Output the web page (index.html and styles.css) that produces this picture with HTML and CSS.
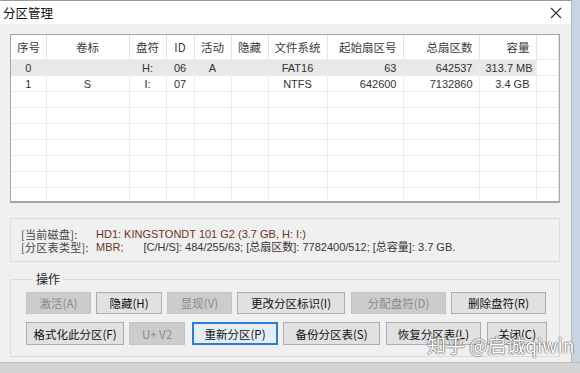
FILE: index.html
```html
<!DOCTYPE html>
<html lang="zh-CN">
<head>
    <meta charset="UTF-8">
    <title>分区管理</title>
    <link rel="stylesheet" href="styles.css">
</head>
<body>
    <div class="window">
        <div class="titlebar">
            <span class="title">分区管理</span>
            <svg class="close" width="12" height="12" viewBox="0 0 12 12">
                <path d="M1 1 L11 11 M11 1 L1 11" stroke="#333" stroke-width="1.1" fill="none"/>
            </svg>
        </div>

        <div class="content">
            <div class="list">
                <table>
                    <colgroup>
                        <col class="c-no"><col class="c-label"><col class="c-drive"><col class="c-id">
                        <col class="c-act"><col class="c-hide"><col class="c-fs"><col class="c-start">
                        <col class="c-total"><col class="c-size"><col>
                    </colgroup>
                    <thead>
                        <tr>
                            <th>序号</th><th>卷标</th><th>盘符</th><th>ID</th><th>活动</th><th>隐藏</th>
                            <th>文件系统</th><th class="r">起始扇区号</th><th class="r">总扇区数</th><th class="r">容量</th><th></th>
                        </tr>
                    </thead>
                    <tbody>
                        <tr class="sel">
                            <td>0</td><td></td><td>H:</td><td>06</td><td>A</td><td></td>
                            <td>FAT16</td><td class="r">63</td><td class="r">642537</td><td class="r">313.7 MB</td><td class="blank"></td>
                        </tr>
                        <tr>
                            <td>1</td><td>S</td><td>I:</td><td>07</td><td></td><td></td>
                            <td>NTFS</td><td class="r">642600</td><td class="r">7132860</td><td class="r">3.4 GB</td><td></td>
                        </tr>
                        <tr><td></td><td></td><td></td><td></td><td></td><td></td><td></td><td></td><td></td><td></td><td></td></tr>
                        <tr><td></td><td></td><td></td><td></td><td></td><td></td><td></td><td></td><td></td><td></td><td></td></tr>
                        <tr><td></td><td></td><td></td><td></td><td></td><td></td><td></td><td></td><td></td><td></td><td></td></tr>
                        <tr><td></td><td></td><td></td><td></td><td></td><td></td><td></td><td></td><td></td><td></td><td></td></tr>
                        <tr><td></td><td></td><td></td><td></td><td></td><td></td><td></td><td></td><td></td><td></td><td></td></tr>
                        <tr><td></td><td></td><td></td><td></td><td></td><td></td><td></td><td></td><td></td><td></td><td></td></tr>
                        <tr><td></td><td></td><td></td><td></td><td></td><td></td><td></td><td></td><td></td><td></td><td></td></tr>
                    </tbody>
                </table>
            </div>

            <div class="info">
                <div class="info-line">
                    <span class="key">[当前磁盘]:</span>
                    <span class="val">HD1: KINGSTONDT 101 G2 (3.7 GB, H: I:)</span>
                </div>
                <div class="info-line">
                    <span class="key">[分区表类型]:</span>
                    <span class="val">MBR;</span>
                    <span class="rest">[C/H/S]: 484/255/63; [总扇区数]: 7782400/512; [总容量]: 3.7 GB.</span>
                </div>
            </div>

            <fieldset class="ops">
                <legend>操作</legend>
                <div class="btn-row">
                    <button class="w65" disabled>激活(A)</button>
                    <button class="w66">隐藏(H)</button>
                    <button class="w65" disabled>显现(V)</button>
                    <button class="w108">更改分区标识(I)</button>
                    <button class="w95 ml6" disabled>分配盘符(D)</button>
                    <button class="w95">删除盘符(R)</button>
                </div>
                <div class="btn-row">
                    <button class="w98">格式化此分区(F)</button>
                    <button class="w56" disabled>U+ V2</button>
                    <button class="w86 ml7 focus">重新分区(P)</button>
                    <button class="w97">备份分区表(S)</button>
                    <button class="w95 ml6">恢复分区表(L)</button>
                    <button class="w60 ml6">关闭(C)</button>
                </div>
            </fieldset>
        </div>
    </div>
    <div class="taskbar"></div>

    <div class="watermark">知乎 @启诚qiwin</div>
</body>
</html>
```

FILE: styles.css
```css
body {
    margin: 0;
    width: 580px;
    height: 373px;
    overflow: hidden;
    background: #c8d4e2;
    font-family: "Liberation Sans", "Noto Sans CJK SC", sans-serif;
    font-size: 11px;
    color: #222;
    position: relative;
}

.window {
    width: 571px;
    height: 361px;
    background: #f0f0f0;
    border-top: 1px solid #9a9a9a;
    border-right: 1px solid #b9b9b9;
}

.titlebar {
    height: 23px;
    background: #fff;
    display: flex;
    align-items: center;
    justify-content: space-between;
    padding: 0 9px 0 3px;
}

.title {
    font-family: "Noto Sans CJK SC", sans-serif;
    font-size: 12.5px;
    color: #111;
}

.content {
    padding: 10px 11px 0 10px;
}

/* partition list */
.list {
    height: 166px;
    background: #fff;
    border: 1px solid #a5a5a5;
    border-bottom-width: 2px;
    overflow: hidden;
}

table {
    width: 100%;
    border-collapse: collapse;
    table-layout: fixed;
}

.c-no { width: 35px; }
.c-label { width: 83px; }
.c-drive { width: 37px; }
.c-id { width: 28px; }
.c-act { width: 37px; }
.c-hide { width: 37px; }
.c-fs { width: 59px; }
.c-start { width: 76px; }
.c-total { width: 76px; }
.c-size { width: 57px; }

th {
    height: 24px;
    padding: 0 6px;
    font-family: "Noto Sans CJK SC", sans-serif;
    font-size: 11.5px;
    font-weight: normal;
    color: #3a3a3a;
    text-align: center;
    border-right: 1px solid #e3e3e3;
    white-space: nowrap;
}

td {
    height: 15px;
    padding: 0 6px;
    text-align: center;
    border-top: 1px solid #ececec;
    border-right: 1px solid #ececec;
    color: #333;
    line-height: 14px;
    white-space: nowrap;
}

th.r, td.r {
    text-align: right;
}

tr.sel td {
    background: #e8e8e8;
}

tr.sel td.blank {
    background: #fff;
}

/* disk info */
.info {
    margin-top: 15px;
    height: 33px;
    padding: 9px 10px 0 10px;
    border: 1px solid #dcdcdc;
    color: #333;
}

.info-line {
    height: 13px;
    line-height: 13px;
    display: flex;
    white-space: nowrap;
}

.key {
    flex: 0 0 75px;
    font-family: "Noto Sans CJK SC", sans-serif;
    font-size: 11px;
    letter-spacing: 0.3px;
    color: #444;
}

.val {
    color: #6e3424;
    margin-right: 20px;
}

.rest {
    color: #3a3434;
}

/* operations */
.ops {
    margin: 9px 0 0 0;
    padding: 5px 0 11px 15px;
    border: 1px solid #dcdcdc;
}

.ops legend {
    margin-left: 7px;
    padding: 0 3px;
    font-family: "Noto Sans CJK SC", sans-serif;
    font-size: 12px;
    line-height: 16px;
    color: #222;
}

.btn-row {
    display: flex;
    gap: 5px;
}

.btn-row + .btn-row {
    margin-top: 8px;
}

button {
    height: 22px;
    padding: 0;
    font-family: "Noto Sans CJK SC", sans-serif;
    font-size: 11.5px;
    color: #111;
    background: #e1e1e1;
    border: 1px solid #adadad;
    border-radius: 0;
}

.btn-row + .btn-row button {
    height: 23px;
}

button:disabled {
    background: #cccccc;
    border-color: #c4c4c4;
    color: #8a8a8a;
}

button.focus {
    border: 2px solid #2a7fd4;
    background: #e5eef7;
}

.w56 { width: 56px; }
.w60 { width: 60px; }
.w65 { width: 65px; }
.w66 { width: 66px; }
.w86 { width: 86px; }
.w95 { width: 95px; }
.w97 { width: 97px; }
.w98 { width: 98px; }
.w108 { width: 108px; }
.ml6 { margin-left: 1px; }
.ml7 { margin-left: 2px; }

.taskbar {
    height: 11px;
    background: #d4d4d4;
    border-top: 1px solid #bdbdbd;
}

.watermark {
    position: absolute;
    left: 427px;
    top: 331px;
    font-family: "Noto Sans CJK SC", sans-serif;
    font-size: 19px;
    font-weight: 400;
    color: #fff;
    text-shadow: 0 0 1px #555, 0 0 1px #555, 0 0 2px rgba(0, 0, 0, 0.4);
    white-space: nowrap;
}
```
